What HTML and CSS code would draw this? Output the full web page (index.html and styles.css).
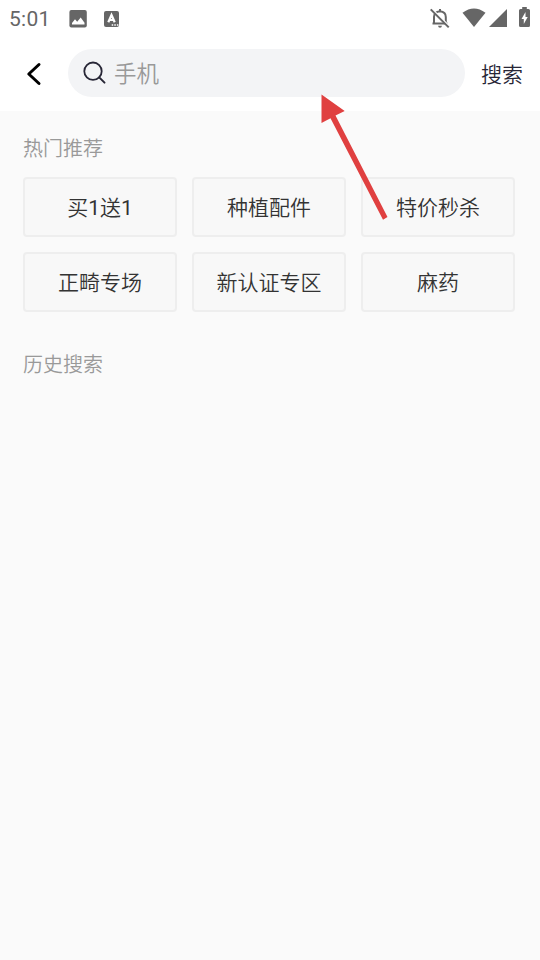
FILE: index.html
```html
<!DOCTYPE html>
<html lang="zh-CN">
<head>
<meta charset="utf-8">
<title>搜索</title>
<link rel="stylesheet" href="styles.css">
</head>
<body>
<div class="screen">
  <header class="top">
    <div class="status">
      <span class="clock">5:01</span>
      <svg class="picture" width="18" height="18" viewBox="0 0 18 18"><rect x=".4" width="17.400" height="17.400" rx="2" fill="#666"/><path d="M3 14.500V13l3-3.800 2.200 2.600 3.500-4.300 3.800 5.200v1.800z" fill="#fff"/></svg>
      <svg class="keyboard" width="16" height="16" viewBox="0 0 16 16"><rect width="15" height="16" rx="2" fill="#666"/><path d="M4.300 11.200 7.500 4 10.700 11.200M5.400 9h4.200" fill="none" stroke="#fff" stroke-width="2.200"/><path d="M7.700 14h1.500M10.300 14h1.500M12.900 14h1.500" stroke="#fff" stroke-width="1.500"/></svg>
      <span class="spacer"></span>
      <svg class="bell" width="20" height="21" viewBox="0 0 20 21"><path d="M4 15.500V9Q4 3.800 10 3.300 15.800 3.800 15.800 9v6.500M2.500 15.500h15M10 1v3" fill="none" stroke="#666" stroke-width="2"/><path d="M8 17.700h4q-.3 2-2 2t-2-2z" fill="#666"/><path d="M2 1.200 20 19.200" stroke="#fff" stroke-width="2"/><path d="M.7 1.400 18.700 19.400" stroke="#666" stroke-width="2"/></svg>
      <svg class="wifi" width="24" height="20" viewBox="0 0 24 20"><path d="M.5 4.800Q12-3.800 23.500 4.800L12 19z" fill="#666"/></svg>
      <svg class="signal" width="18" height="18" viewBox="0 0 18 18"><path d="M18 0v18H0z" fill="#666"/></svg>
      <svg class="battery" width="11" height="20" viewBox="0 0 11 20"><path d="M3.200 0h4.600v2H9.500Q11 2 11 3.500v15Q11 20 9.500 20h-8Q0 20 0 18.500v-15Q0 2 1.500 2h1.700z" fill="#666"/><path d="M6.500 5 2.500 12h2.300v5L8.700 10H6.500z" fill="#fff"/></svg>
    </div>
    <div class="searchbar">
      <svg class="back" width="16" height="24" viewBox="0 0 16 24"><path d="M13 2.500 2.800 12 13 21.500" fill="none" stroke="#000" stroke-width="3" stroke-linecap="round" stroke-linejoin="round"/></svg>
      <div class="field">
        <svg width="24" height="24" viewBox="0 0 24 24"><circle cx="10" cy="10.200" r="8.700" fill="none" stroke="#272636" stroke-width="1.800"/><path d="m16.200 16.400 5.300 5.200" stroke="#272636" stroke-width="2" stroke-linecap="round"/></svg>
        <span class="placeholder">手机</span>
      </div>
      <span class="submit">搜索</span>
    </div>
    <svg class="arrow" width="68" height="126" viewBox="0 0 68 126"><path d="M1.500 .5 24.700 17 15.500 21.500 67.500 123 63 125.700 10.500 24.300 1.500 29z" fill="#e04040"/></svg>
  </header>
  <main class="content">
    <h2>热门推荐</h2>
    <div class="tags">
      <div class="tag">买<span class="num">1</span>送<span class="num">1</span></div>
      <div class="tag">种植配件</div>
      <div class="tag">特价秒杀</div>
      <div class="tag">正畸专场</div>
      <div class="tag">新认证专区</div>
      <div class="tag">麻药</div>
    </div>
    <h2>历史搜索</h2>
  </main>
</div>
</body>
</html>
```
FILE: styles.css
```css
* { box-sizing: border-box; }
body {
  margin: 0;
  background: #fafafa;
  font-family: Roboto, "Noto Sans CJK SC", sans-serif;
  font-weight: 350;
}
.screen { min-height: 960px; }
.top { position: relative; height: 111px; background: #fff; }
.status { display: flex; height: 37px; padding: 0 10px 0 9px; align-items: center; }
.clock { width: 60px; font: 400 21px/36px Roboto, sans-serif; letter-spacing: 0.3px; color: #666; }
.keyboard { margin-left: 17px; }
.spacer { flex: 1; }
.bell { margin-top: -1px; }
.wifi { margin-left: 12px; margin-top: -1px; }
.signal { margin-left: 3px; margin-top: -1px; }
.battery { margin-left: 12px; margin-top: -3px; }
.searchbar { display: flex; height: 72px; align-items: center; }
.back { margin-left: 26px; margin-top: 2px; }
.field {
  display: flex;
  width: 397px;
  height: 48px;
  margin-left: 26px;
  padding-left: 15px;
  align-items: center;
  border-radius: 24px;
  background: #f3f4f6;
}
.placeholder { margin-left: 7px; padding-top: 2px; font-size: 22.5px; line-height: 46px; color: #999; }
.submit { margin-left: 16px; padding-top: 4px; font-size: 21px; line-height: 48px; color: #272636; }
.arrow { position: absolute; left: 320px; top: 94px; }
.content { padding: 23px 25px 0 23px; }
h2 { margin: 0; font-size: 20px; font-weight: 350; line-height: 30px; color: #999; }
.tags {
  display: grid;
  grid-template-columns: repeat(3, 154px);
  grid-auto-rows: 60px;
  gap: 15px;
  margin: 13px 0 38px;
}
.tag {
  border: 2px solid #eee;
  border-radius: 4px;
  background: #f8f8f8;
  font-size: 21px;
  line-height: 58px;
  text-align: center;
  color: #333;
}
.num { font-weight: 400; }
```
